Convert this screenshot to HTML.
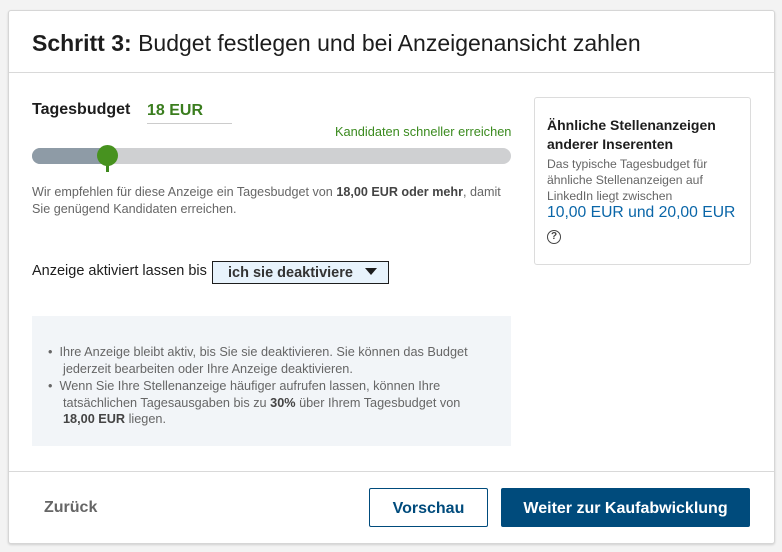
<!DOCTYPE html>
<html><head><meta charset="utf-8"><style>
*{margin:0;padding:0;box-sizing:border-box}
body{width:782px;height:552px;background:#f3f3f3;font-family:"Liberation Sans",sans-serif;position:relative;overflow:hidden}
.modal{position:absolute;left:8px;top:10px;width:767px;height:534px;background:#fff;border:1px solid #d6d6d6;border-radius:3px;box-shadow:0 1px 2px rgba(0,0,0,.15)}
.a{position:absolute;white-space:nowrap}
</style></head><body>
<div class="modal"></div>
<div class="a" style="left:32px;top:30px;font-size:23px;color:#1d1d1d"><b>Schritt 3:</b> Budget festlegen und bei Anzeigenansicht zahlen</div>
<div class="a" style="left:9px;top:72px;width:765px;height:1px;background:#d9d9d9"></div>

<div class="a" style="left:32px;top:101px;font-size:16px;font-weight:bold;color:#1d1d1d">Tagesbudget</div>
<div class="a" style="left:147px;top:102px;font-size:16px;font-weight:bold;color:#3a7d1e">18 EUR</div>
<div class="a" style="left:147px;top:123px;width:85px;height:1px;background:#ccc"></div>
<div class="a" style="left:335px;top:124px;font-size:12.8px;color:#3a8a1e">Kandidaten schneller erreichen</div>
<div class="a" style="left:32px;top:148px;width:479px;height:16px;border-radius:8px;background:#cfd0d2"></div>
<div class="a" style="left:32px;top:148px;width:80px;height:16px;border-radius:8px 0 0 8px;background:#8e9ba6"></div>
<div class="a" style="left:106px;top:160px;width:3px;height:12px;background:#3f8a1e"></div>
<div class="a" style="left:97px;top:145px;width:21px;height:21px;border-radius:50%;background:#47921f"></div>
<div class="a" style="left:32px;top:184px;font-size:12.6px;line-height:17px;color:#666">Wir empfehlen für diese Anzeige ein Tagesbudget von <b style="color:#444">18,00 EUR oder mehr</b>, damit<br>Sie genügend Kandidaten erreichen.</div>

<div class="a" style="left:32px;top:263px;font-size:14.5px;color:#1d1d1d">Anzeige aktiviert lassen bis</div>
<div class="a" style="left:212px;top:261px;width:177px;height:23px;border:1.5px solid #1d1d1d;background:#e8f3fc;font-size:14.5px;font-weight:bold;color:#333;padding:3px 0 0 15px">ich sie deaktiviere <span style="display:inline-block;margin-left:8px;width:0;height:0;border-left:6px solid transparent;border-right:6px solid transparent;border-top:7px solid #1d1d1d;vertical-align:2px"></span></div>

<div class="a" style="left:32px;top:316px;width:479px;height:130px;background:#f2f5f8"></div>
<div class="a" style="left:48px;top:344px;font-size:12.7px;line-height:16.5px;color:#666">
<div>•&nbsp;&nbsp;Ihre Anzeige bleibt aktiv, bis Sie sie deaktivieren. Sie können das Budget<br><span style="padding-left:15px">jederzeit bearbeiten oder Ihre Anzeige deaktivieren.</span></div>
<div style="margin-top:1px">•&nbsp;&nbsp;Wenn Sie Ihre Stellenanzeige häufiger aufrufen lassen, können Ihre<br><span style="padding-left:15px">tatsächlichen Tagesausgaben bis zu <b style="color:#444">30%</b> über Ihrem Tagesbudget von</span><br><span style="padding-left:15px"><b style="color:#444">18,00 EUR</b> liegen.</span></div>
</div>

<div class="a" style="left:534px;top:97px;width:217px;height:168px;border:1px solid #dcdcdc;border-radius:3px"></div>
<div class="a" style="left:547px;top:116px;font-size:14px;line-height:19px;font-weight:bold;color:#1d1d1d">Ähnliche Stellenanzeigen<br>anderer Inserenten</div>
<div class="a" style="left:547px;top:156px;font-size:12.2px;line-height:16px;color:#666">Das typische Tagesbudget für<br>ähnliche Stellenanzeigen auf<br>LinkedIn liegt zwischen</div>
<div class="a" style="left:547px;top:204px;font-size:15.7px;color:#0a66a8">10,00 EUR und 20,00 EUR</div>
<div class="a" style="left:547px;top:230px;width:14px;height:14px;border:1.8px solid #444;border-radius:50%;font-size:10px;font-weight:bold;color:#444;text-align:center;line-height:11px">?</div>

<div class="a" style="left:9px;top:471px;width:765px;height:1px;background:#d9d9d9"></div>
<div class="a" style="left:44px;top:499px;font-size:16px;font-weight:bold;color:#666">Zurück</div>
<div class="a" style="left:369px;top:488px;width:119px;height:39px;border:1px solid #004b7c;border-radius:2px;font-size:16px;font-weight:bold;color:#004b7c;text-align:center;line-height:39px">Vorschau</div>
<div class="a" style="left:501px;top:488px;width:249px;height:39px;background:#004b7c;border-radius:2px;font-size:16px;font-weight:bold;color:#fff;text-align:center;line-height:41px">Weiter zur Kaufabwicklung</div>
</body></html>
